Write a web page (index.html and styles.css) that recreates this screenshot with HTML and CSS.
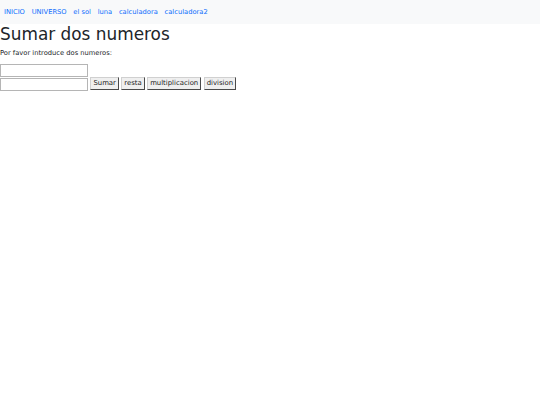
FILE: index.html
```html
<!DOCTYPE html>
<html lang="es">
<head>
<meta charset="utf-8">
<title>Sumar dos numeros</title>
<link rel="stylesheet" href="styles.css">
</head>
<body>
<nav class="navbar">
  <a class="nav-link" href="#">INICIO</a>
  <a class="nav-link" href="#">UNIVERSO</a>
  <a class="nav-link" href="#">el sol</a>
  <a class="nav-link" href="#">luna</a>
  <a class="nav-link" href="#">calculadora</a>
  <a class="nav-link" href="#">calculadora2</a>
</nav>
<h1 class="title">Sumar dos numeros</h1>
<p class="lead-text">Por favor introduce dos numeros:</p>
<form class="calc">
  <input class="num" type="text">
  <div class="row">
    <input class="num" type="text">
    <button type="button" class="btn">Sumar</button>
    <button type="button" class="btn">resta</button>
    <button type="button" class="btn">multiplicacion</button>
    <button type="button" class="btn">division</button>
  </div>
</form>
</body>
</html>
```

FILE: styles.css
```css
html, body {
  margin: 0;
  padding: 0;
  background: #fff;
}
body {
  font-family: "DejaVu Sans", sans-serif;
  font-size: 6.72px;
  line-height: 1.5;
  color: #212529;
}
.navbar {
  display: flex;
  align-items: center;
  background: #f8f9fa;
  padding: 3.36px 0 3.36px 0.6px;
  height: 24px;
  box-sizing: border-box;
}
.nav-link {
  color: #0d6efd;
  text-decoration: none;
  padding: 3.36px 3.36px;
}
.title {
  font-size: 16.9px;
  font-weight: 400;
  line-height: 1.2;
  margin: 0 0 3.36px 0;
}
.lead-text {
  margin: 0 0 6.72px 0;
}
.calc {
  display: flex;
  flex-direction: column;
  align-items: flex-start;
}
.row {
  display: flex;
  align-items: flex-end;
  gap: 2.4px;
}
.num {
  width: 88px;
  height: 13px;
  box-sizing: border-box;
  border: 1px solid #b5b5b5;
  padding: 0 2px;
  margin: 0;
  font-family: "DejaVu Sans", sans-serif;
  font-size: 6.72px;
  background: #fff;
}
.btn {
  height: 13px;
  box-sizing: border-box;
  padding: 0 2px;
  margin: 0 0 0.6px 0;
  font-family: "DejaVu Sans", sans-serif;
  font-size: 6.9px;
  line-height: 1;
  color: #1a1a1a;
  background: #efefef;
  border: 1px solid;
  border-color: #d0d0d0 #4a4a4a #4a4a4a #d0d0d0;
  border-radius: 0;
}
```
